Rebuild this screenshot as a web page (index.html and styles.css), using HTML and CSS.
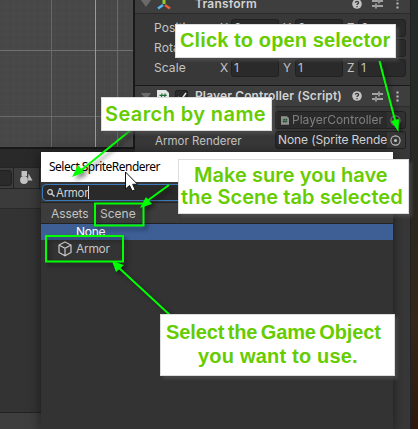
FILE: index.html
```html
<!DOCTYPE html>
<html lang="en">
<head>
<meta charset="utf-8">
<title>Select SpriteRenderer</title>
<link rel="stylesheet" href="styles.css">
</head>
<body>
<svg width="0" height="0" class="defs">
  <symbol id="help" viewBox="0 0 10 10"><circle cx="5" cy="5" r="4.8" fill="#c4c4c4"/><path d="M3.4 3.8Q3.5 2.3 5 2.3T6.6 3.7Q6.6 4.5 5.7 4.9Q5 5.2 5 6M5 7v1.2" fill="none" stroke="#383838" stroke-width="1.3"/></symbol>
  <symbol id="preset" viewBox="0 0 11 11"><path d="M0 3h6M8 3h3M7 .5v5M0 8h3M5 8h6M4 5.5v5" fill="none" stroke="#c4c4c4" stroke-width="1.3"/></symbol>
  <symbol id="dots" viewBox="0 0 3 11"><path d="M.5.5h2v2h-2zM.5 4.500h2v2h-2zM.5 8.500h2v2h-2z" fill="#c4c4c4"/></symbol>
  <symbol id="script" viewBox="0 0 12 13"><path d="M0 0h9l3 3v10H0z" fill="#e4e8e4"/><path d="M5 3.500 4 10M8.200 3.500 7.200 10M2.500 5.400h7.200M2.300 8h7.200" stroke="#1d6b35" stroke-width="1.2"/></symbol>
  <symbol id="target" viewBox="0 0 11 11"><circle cx="5.500" cy="5.500" r="4.600" fill="none" stroke="#c4c4c4" stroke-width="1.100"/><circle cx="5.500" cy="5.500" r="1.500" fill="#c4c4c4"/></symbol>
  <symbol id="fold" viewBox="0 0 10 7"><path d="M0 0h10L5 7z" fill="#6a6a6a"/></symbol>
</svg>
<div class="editor">
  <div class="left">
    <div class="scene"></div>
    <div class="panel-gap"></div>
    <div class="toolbar">
      <div class="filter"></div>
      <div class="shapes"><svg width="13" height="13" viewBox="0 0 13 13"><path d="M1.500 0h5.500v5H1.500zM8.500 2.500l4 7H8z" fill="#c4c4c4"/><circle cx="4" cy="9" r="3.900" fill="#c4c4c4"/></svg></div>
    </div>
    <div class="crumbs"></div>
    <div class="assets"></div>
    <div class="status"></div>
  </div>
  <div class="inspector">
    <div class="head first">
      <svg class="fold"><use href="#fold"/></svg>
      <svg class="axes" width="14" height="12" viewBox="0 0 14 12"><path d="M7 6V0" stroke="#8fd02b" stroke-width="3"/><path d="M6 7 1 10.500" stroke="#58b8ef" stroke-width="2.500"/><path d="m8 7 5 3.500" stroke="#ee5c32" stroke-width="2.500"/></svg>
      <b class="t-transform">Transform</b>
      <svg class="help"><use href="#help"/></svg><svg class="preset"><use href="#preset"/></svg><svg class="dots"><use href="#dots"/></svg>
    </div>
    <div class="props">
      <div class="vec"><span class="label">Position</span><i>X</i><div class="field">0</div><i>Y</i><div class="field">0</div><i>Z</i><div class="field">0</div></div>
      <div class="vec"><span class="label">Rotation</span><i>X</i><div class="field">0</div><i>Y</i><div class="field">0</div><i>Z</i><div class="field">0</div></div>
      <div class="vec"><span class="label">Scale</span><i>X</i><div class="field">1</div><i>Y</i><div class="field">1</div><i>Z</i><div class="field">1</div></div>
    </div>
    <div class="head second">
      <svg class="fold"><use href="#fold"/></svg>
      <svg class="script"><use href="#script"/></svg>
      <div class="check"><svg width="10" height="9" viewBox="0 0 10 9"><path d="m1 5 3 3 5-7" fill="none" stroke="#e4e4e4" stroke-width="1.500"/></svg></div>
      <b class="t-player">Player Controller (Script)</b>
      <svg class="help"><use href="#help"/></svg><svg class="preset"><use href="#preset"/></svg><svg class="dots"><use href="#dots"/></svg>
    </div>
    <div class="refs">
      <div class="ref off"><span class="label"></span><div class="object"><svg class="mini"><use href="#script"/></svg><span class="t-pc">PlayerController</span><em><svg><use href="#target"/></svg></em></div></div>
      <div class="ref"><span class="label">Armor Renderer</span><div class="object"><span class="t-none">None (Sprite Rende</span><em><svg><use href="#target"/></svg></em></div></div>
    </div>
  </div>
  <div class="desktop"></div>
</div>

<div class="dialog">
  <div class="title">Select SpriteRenderer</div>
  <div class="search"><div class="box"><svg width="8" height="8" viewBox="0 0 8 8"><circle cx="3" cy="3" r="2.300" fill="none" stroke="#d0d0d0" stroke-width="1.200"/><path d="m4.700 4.700 2.800 2.800" stroke="#d0d0d0" stroke-width="1.400"/></svg><span class="query">Armor</span><u></u></div></div>
  <div class="tabs"><span class="t-assets">Assets</span><span class="t-scene">Scene</span></div>
  <div class="row picked"><span>None</span></div>
  <div class="row"><svg width="14" height="16" viewBox="0 0 14 16"><path d="M7 1l6 3v7.500l-6 3.300-6-3.300V4zM1 4l6 3.200L13 4M7 7.200v7.400" fill="none" stroke="#c8c8c8" stroke-width="1.200"/></svg><span>Armor</span></div>
</div>

<svg class="marks" width="418" height="429" viewBox="0 0 418 429">
  <g class="marker">
    <path d="M95 203.500h48.500v22H95zM46 236h77v25.500H46z"/>
    <path d="M132 129 79 172M169 185l-22 16M171 316l-53-49M379.500 61 396 124"/>
    <path class="tip" d="m72 177 6-12 6 7.500zM140 208l6-11 6 7zM112 261l12 4-8 7zM398.500 132l-7.500-11 8-2z"/>
  </g>
  <path class="cursor" d="M125.500 172v17l4-3.500 2.700 5.500 3-1.300-2.500-5.400h4.800z"/>
</svg>
<div class="note open"><span>Click to open selector</span></div>
<div class="note name"><span>Search by name</span></div>
<div class="note tab"><span class="l1">Make sure you have</span><span class="l2">the Scene tab selected</span></div>
<div class="note use"><span class="l1">Select the Game Object</span><span class="l2">you want to use.</span></div>
</body>
</html>
```
FILE: styles.css
```css
* { box-sizing: border-box; }
body { margin: 0; width: 418px; height: 429px; overflow: hidden; position: relative; background: #333; color: #c4c4c4; font: 12px/16px Inter, sans-serif; }
svg { flex: none; display: block; }
span, b { white-space: nowrap; }
.defs { position: absolute; }
.editor { display: grid; grid-template-columns: 135px 276px 7px; height: 429px; }
.left { display: flex; flex-direction: column; }
.scene {
  height: 147px; border-right: 2px solid #191919; background-color: #474747;
  background-image:
    linear-gradient(90deg, transparent 51px, #696969 51px 52px, transparent 52px 95px, #999 95px 96px, transparent 96px 117px, #696969 117px 118px, transparent 118px),
    linear-gradient(transparent 50px, #717171 50px 51px, transparent 51px 116px, #696969 116px 117px, transparent 117px),
    repeating-linear-gradient(90deg, transparent 0 6px, #4a4a4a 6px 7px),
    repeating-linear-gradient(transparent 0 6px, #4a4a4a 6px 7px);
}
.panel-gap { height: 20px; background: #292929; border-top: 2px solid #191919; }
.toolbar { height: 22px; background: #3c3c3c; border-top: 1px solid #242424; border-bottom: 1px solid #242424; display: flex; align-items: center; }
.filter { width: 12px; height: 16px; border: 1px solid #202020; border-left: 0; border-radius: 0 4px 4px 0; background: #2a2a2a; }
.shapes { height: 20px; margin-left: 1px; padding: 3px 0 0 6px; border-left: 1px solid #242424; width: 27px; border-right: 1px solid #242424; }
.crumbs { height: 20px; background: #3b3b3b; border-bottom: 1px solid #292929; }
.assets { flex: 1; background: #333; }
.status { height: 17px; background: #3e3e3e; border-top: 1px solid #222; }
.inspector { background: #383838; border-right: 1px solid #222; }
.head { display: flex; align-items: center; background: #3e3e3e; }
.head.first { height: 14px; border-bottom: 1px solid #2a2a2a; padding-bottom: 6px; }
.head.second { height: 22px; border-top: 1px solid #191919; border-bottom: 1px solid #2d2d2d; }
.head b { font-weight: 600; color: #d2d2d2; }
.head .fold { width: 10px; height: 7px; margin-left: 6px; }
.axes { margin-left: 6px; }
.t-transform { margin-left: 24px; letter-spacing: .2px; width: 157px; }
.head .help { width: 10px; height: 10px; }
.head .preset { width: 11px; height: 11px; margin-left: 10px; }
.head .dots { width: 3px; height: 11px; margin-left: 13px; }
.script { width: 12px; height: 13px; margin-left: 6px; }
.check { width: 13px; height: 13px; margin-left: 6px; background: #2a2a2a; border: 1px solid #202020; border-radius: 2px; padding: 1px; }
.t-player { margin-left: 7px; width: 157px; letter-spacing: .13px; }
.props { height: 71px; padding: 5px 5px 0 19px; display: flex; flex-direction: column; gap: 3px; }
.vec { display: grid; grid-template-columns: 66px 11px 48px 16px 48px 15px 48px; height: 17px; line-height: 18px; }
.vec .label { letter-spacing: .1px; }
.vec i { font-style: normal; }
.vec i + .field + i { padding-left: 4px; }
.field { background: #2a2a2a; border: 1px solid #212121; border-radius: 3px; padding-left: 2px; line-height: 16px; }
.refs { padding: 4px 5px 0 19px; display: flex; flex-direction: column; gap: 2px; }
.ref { display: flex; height: 18px; line-height: 20px; }
.ref .label { flex: none; width: 121px; font-size: 11.5px; padding-left: 1px; }
.object { flex: none; width: 131px; background: #2a2a2a; border: 1px solid #212121; border-radius: 3px; display: flex; align-items: center; padding-left: 2px; overflow: hidden; }
.object em { margin-left: auto; width: 18px; height: 16px; padding: 3px; background: #373737; flex: none; }
.object em svg { width: 11px; height: 11px; }
.off .object > * { opacity: .55; }
.mini { width: 8px; height: 9px; margin: 0 3px; }
.t-pc { letter-spacing: 0; }
.t-none { letter-spacing: -.1px; color: #d2d2d2; width: 109px; }
.desktop { background: linear-gradient(#242b28, #272b26 25%, #29271e 50%, #352719 75%, #2d1a0d); }

.dialog { position: absolute; left: 41px; top: 152px; width: 352px; height: 277px; background: #333; box-shadow: 0 2px 12px #0008; display: flex; flex-direction: column; }
.title { height: 30px; background: #fff; color: #000; font: 12px/30px "Noto Sans", sans-serif; letter-spacing: -.52px; padding-left: 8px; white-space: nowrap; }
.search { height: 21px; padding: 2px 1px; background: #383838; border-bottom: 1px solid #242424; }
.box { height: 17px; border: 1px solid #3a79bb; border-radius: 4px; background: #2a2a2a; display: flex; align-items: center; padding-left: 4px; }
.query { margin-left: 1px; color: #d2d2d2; font-size: 11.500px; letter-spacing: -.3px; }
.box u { width: 1px; height: 13px; background: #e0e0e0; }
.tabs { height: 21px; background: #3c3c3c; border-bottom: 1px solid #232323; display: flex; line-height: 22px; padding-left: 10px; }
.t-assets { width: 49px; letter-spacing: -.1px; }
.row { height: 17px; display: flex; align-items: center; padding-left: 17px; }
.row span { margin-left: 4px; letter-spacing: -.3px; }
.row.picked { height: 16px; background: #3e5f96; color: #fff; padding-left: 31px; line-height: 18px; }

.marks { position: absolute; left: 0; top: 0; }
.marker { filter: drop-shadow(3px 3px 2px #0007); fill: none; stroke: #0f0; stroke-width: 2; }
.marker .tip { fill: #0f0; stroke: none; }
.cursor { fill: #fff; stroke: #111; }
.note { position: absolute; background: #fff; color: #6c0; border: 1px solid #ddd; box-shadow: 3px 3px 3px #5559; font-weight: 600; font-size: 20px; line-height: 22px; }
.note span { display: block; width: max-content; }
.open { left: 175px; top: 24px; width: 221px; height: 34px; padding: 4px 0 0 4px; font-family: "Liberation Sans", sans-serif; letter-spacing: .12px; }
.name { left: 101px; top: 97px; width: 171px; height: 34px; padding: 5px 0 0 3px; letter-spacing: .4px; }
.tab { left: 178px; top: 159px; width: 231px; height: 55px; padding: 4px 0 0 2px; letter-spacing: .05px; }
.tab .l1 { margin-left: 13px; }
.use { left: 160px; top: 314px; width: 235px; height: 62px; padding: 5px 0 0 5px; font-family: "Liberation Sans", sans-serif; line-height: 24px; letter-spacing: -.12px; }
.use .l1 { word-spacing: -2px; }
.use .l2 { margin-left: 32px; letter-spacing: .2px; }
```
